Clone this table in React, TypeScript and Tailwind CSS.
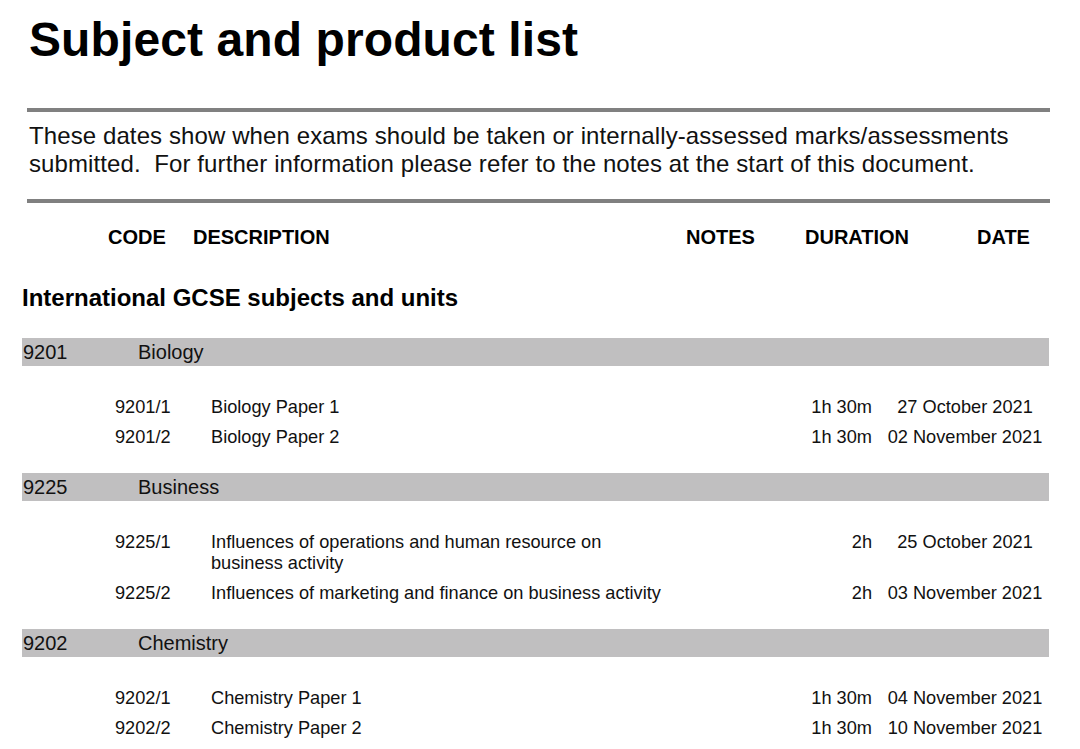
import React from "react";

type Unit = { code: string; desc: string; dur: string; date: string };
type Subject = { code: string; name: string; units: Unit[] };

const subjects: Subject[] = [
  {
    code: "9201",
    name: "Biology",
    units: [
      { code: "9201/1", desc: "Biology Paper 1", dur: "1h 30m", date: "27 October 2021" },
      { code: "9201/2", desc: "Biology Paper 2", dur: "1h 30m", date: "02 November 2021" },
    ],
  },
  {
    code: "9225",
    name: "Business",
    units: [
      {
        code: "9225/1",
        desc: "Influences of operations and human resource on business activity",
        dur: "2h",
        date: "25 October 2021",
      },
      {
        code: "9225/2",
        desc: "Influences of marketing and finance on business activity",
        dur: "2h",
        date: "03 November 2021",
      },
    ],
  },
  {
    code: "9202",
    name: "Chemistry",
    units: [
      { code: "9202/1", desc: "Chemistry Paper 1", dur: "1h 30m", date: "04 November 2021" },
      { code: "9202/2", desc: "Chemistry Paper 2", dur: "1h 30m", date: "10 November 2021" },
    ],
  },
];

export default function App() {
  return (
    <div
      className="w-[1080px] h-[749px] overflow-hidden bg-white text-[#111]"
      style={{ fontFamily: '"Liberation Sans", Arial, sans-serif' }}
    >
      <h1 className="pl-[29px] pt-[16px] text-[48px] leading-[48px] font-bold tracking-[0.1px] text-black">
        Subject and product list
      </h1>
      <div className="ml-[27px] mr-[30px] mt-[44px] h-[4px] bg-[#808080]" />
      <p className="pl-[29px] mt-[10px] text-[24px] leading-[28px] tracking-[0.1px]">
        These dates show when exams should be taken or internally-assessed marks/assessments
        <br />
        submitted.{"\u00a0"} For further information please refer to the notes at the start of this document.
      </p>
      <div className="ml-[27px] mr-[30px] mt-[21px] h-[4px] bg-[#808080]" />

      <div className="flex pl-[108px] mt-[22px] text-[20px] leading-[24px] font-bold text-black">
        <div className="w-[85px]">CODE</div>
        <div className="w-[493px]">DESCRIPTION</div>
        <div className="w-[119px]">NOTES</div>
        <div className="w-[172px]">DURATION</div>
        <div>DATE</div>
      </div>

      <h2 className="pl-[22px] mt-[35px] text-[24px] leading-[28px] font-bold text-black">
        International GCSE subjects and units
      </h2>

      <div className="mt-[26px] flex flex-col">
        {subjects.map((s, si) => (
          <div key={s.code} className={si === 0 ? "" : "mt-[21px]"}>
            <div className="ml-[22px] w-[1027px] h-[28px] bg-[#c0bfc0] flex items-center text-[20px] leading-[28px]">
              <div className="w-[116px] pl-[1px]">{s.code}</div>
              <div>{s.name}</div>
            </div>
            <div className="mt-[26px] flex flex-col text-[18.2px] leading-[21px]">
              {s.units.map((u) => (
                <div key={u.code} className="flex items-start py-[4.5px] pl-[115px]">
                  <div className="w-[96px]">{u.code}</div>
                  <div className="w-[458px]">{u.desc}</div>
                  <div className="w-[103px]" />
                  <div className="w-[100px] text-right">{u.dur}</div>
                  <div className="w-[8px]" />
                  <div className="w-[170px] text-center">{u.date}</div>
                </div>
              ))}
            </div>
          </div>
        ))}
      </div>
    </div>
  );
}
